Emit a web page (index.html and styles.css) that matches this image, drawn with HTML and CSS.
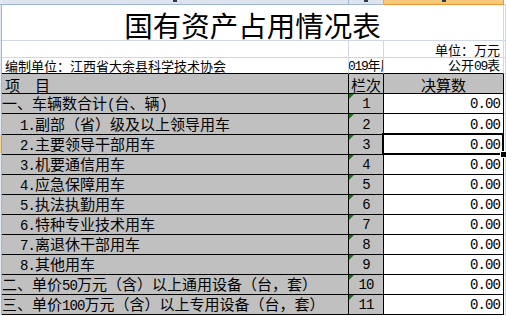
FILE: index.html
```html
<!DOCTYPE html>
<html lang="zh-CN">
<head>
<meta charset="utf-8">
<title>国有资产占用情况表</title>
<link rel="stylesheet" href="styles.css">
</head>
<body>
<div class="sheet">
  <div class="hd-edge"></div>
  <div class="hd"><span class="hd-mark"></span></div>
  <div class="hd"><span class="hd-mark"></span></div>
  <div class="hd hd-sel"><span class="hd-mark"></span></div>
  <div class="hd-d"></div>

  <div class="edge"></div>
  <div class="c title"><span>国有资产占用情况表</span></div>
  <div class="c"></div>

  <div class="edge"></div>
  <div class="c"></div>
  <div class="c"></div>
  <div class="c small right"><span>单位：万元</span></div>
  <div class="c"></div>

  <div class="edge"></div>
  <div class="c small top-line org"><span>编制单位：江西省大余县科学技术协会</span></div>
  <div class="c small top-line clip"><span class="clip-in"><span class="ns">2019</span>年度</span></div>
  <div class="c small top-line right"><span>公开<span class="ns">09</span>表</span></div>
  <div class="c"></div>

  <div class="edge"></div>
  <div class="c b gray head lead"><span>项　目</span></div>
  <div class="c b gray head center"><span>栏次</span></div>
  <div class="c b gray head center"><span>决算数</span></div>
  <div class="c"></div>

  <div class="edge"></div>
  <div class="c b gray lab"><span>一、车辆数合计<span class="n">(</span>台、辆<span class="n">)</span></span></div>
  <div class="c b gray no"><span class="n">1</span></div>
  <div class="c b val"><span class="n">0.00</span></div>
  <div class="c"></div>

  <div class="edge"></div>
  <div class="c b gray lab sub"><span><span class="n">1.</span>副部（省）级及以上领导用车</span></div>
  <div class="c b gray no"><span class="n">2</span></div>
  <div class="c b val"><span class="n">0.00</span></div>
  <div class="c"></div>

  <div class="edge edge-sel"></div>
  <div class="c b gray lab sub"><span><span class="n">2.</span>主要领导干部用车</span></div>
  <div class="c b gray no"><span class="n">3</span></div>
  <div class="c b val sel"><span class="n">0.00</span><span class="selbox"></span><span class="handle"></span></div>
  <div class="c"></div>

  <div class="edge"></div>
  <div class="c b gray lab sub"><span><span class="n">3.</span>机要通信用车</span></div>
  <div class="c b gray no"><span class="n">4</span></div>
  <div class="c b val"><span class="n">0.00</span></div>
  <div class="c"></div>

  <div class="edge"></div>
  <div class="c b gray lab sub"><span><span class="n">4.</span>应急保障用车</span></div>
  <div class="c b gray no"><span class="n">5</span></div>
  <div class="c b val"><span class="n">0.00</span></div>
  <div class="c"></div>

  <div class="edge"></div>
  <div class="c b gray lab sub"><span><span class="n">5.</span>执法执勤用车</span></div>
  <div class="c b gray no"><span class="n">6</span></div>
  <div class="c b val"><span class="n">0.00</span></div>
  <div class="c"></div>

  <div class="edge"></div>
  <div class="c b gray lab sub"><span><span class="n">6.</span>特种专业技术用车</span></div>
  <div class="c b gray no"><span class="n">7</span></div>
  <div class="c b val"><span class="n">0.00</span></div>
  <div class="c"></div>

  <div class="edge"></div>
  <div class="c b gray lab sub"><span><span class="n">7.</span>离退休干部用车</span></div>
  <div class="c b gray no"><span class="n">8</span></div>
  <div class="c b val"><span class="n">0.00</span></div>
  <div class="c"></div>

  <div class="edge"></div>
  <div class="c b gray lab sub"><span><span class="n">8.</span>其他用车</span></div>
  <div class="c b gray no"><span class="n">9</span></div>
  <div class="c b val"><span class="n">0.00</span></div>
  <div class="c"></div>

  <div class="edge"></div>
  <div class="c b gray lab"><span>二、单价<span class="n">50</span>万元（含）以上通用设备（台，套）</span></div>
  <div class="c b gray no"><span class="n">10</span></div>
  <div class="c b val"><span class="n">0.00</span></div>
  <div class="c"></div>

  <div class="edge"></div>
  <div class="c b gray lab"><span>三、单价<span class="n">100</span>万元（含）以上专用设备（台，套）</span></div>
  <div class="c b gray no"><span class="n">11</span></div>
  <div class="c b val"><span class="n">0.00</span></div>
  <div class="c"></div>
</div>
</body>
</html>
```

FILE: styles.css
```css
* { box-sizing: border-box; }

html, body {
  margin: 0;
  padding: 0;
  background: #ffffff;
}

body {
  width: 506px;
  height: 316px;
  overflow: hidden;
  font-family: "Noto Sans CJK SC", "Noto Sans", sans-serif;
  color: #000000;
}

.sheet {
  display: grid;
  grid-template-columns: 2px 347px 35px 120px 2px;
  grid-template-rows: 5px 36px 17px 16px 20px 20px 21px repeat(9, 20px);
}

/* column header strip (bottom of Excel headers) */
.hd-edge {
  background: #e4eaf3;
  border-bottom: 1px solid #9eb6ce;
}
.hd {
  display: flex;
  justify-content: center;
  align-items: flex-start;
  background: #dde4ee;
  border-right: 1px solid #9eb6ce;
  border-bottom: 1px solid #9eb6ce;
}
.hd-sel {
  background: #f8c978;
  border-right-color: #f29436;
  border-bottom-color: #f29436;
}
.hd-d {
  background: #ffffff;
  border-bottom: 1px solid #d0d7e5;
}
.hd-mark {
  width: 4px;
  height: 2px;
  background: #2b3a4e;
}

/* row header edge */
.edge {
  background: #e4eaf3;
  border-right: 1px solid #9eb6ce;
  border-bottom: 1px solid #c5d2e3;
}
.edge-sel {
  background: #f8d28e;
  border-right-color: #f29436;
}

/* cells */
.c {
  display: flex;
  align-items: center;
  white-space: nowrap;
  border-right: 1px solid #d0d7e5;
  border-bottom: 1px solid #d0d7e5;
  font-size: 15px;
  line-height: 15px;
}

.b {
  border-right-color: #000000;
  border-bottom-color: #000000;
}

.gray { background: #c0c0c0; }

.title {
  grid-column: span 3;
  justify-content: center;
  font-size: 28.5px;
  line-height: 29px;
  padding-top: 3px;
}

.small {
  font-size: 13px;
  line-height: 13px;
}

.right {
  justify-content: flex-end;
  padding-right: 3px;
}

.center { justify-content: center; }

.top-line { border-bottom-color: #000000; }

.org { padding-left: 3px; }

.clip {
  overflow: hidden;
  justify-content: center;
}
.clip-in {
  flex: none;
  padding-left: 3px;
}

.head { padding-top: 2px; }
.lead { padding-left: 3px; }

.lab { padding-top: 1px; }
.sub { padding-left: 18px; }

.no {
  position: relative;
  justify-content: center;
  padding-top: 2px;
}
.no::before {
  content: "";
  position: absolute;
  left: 0;
  top: 0;
  width: 0;
  height: 0;
  border-style: solid;
  border-width: 5px 5px 0 0;
  border-color: #0a7d0a transparent transparent transparent;
}

.val {
  justify-content: flex-end;
  padding-right: 3px;
  padding-top: 2px;
}

/* half-width digits / latin */
.n {
  font-family: "Liberation Mono", "DejaVu Sans Mono", monospace;
  font-size: 14px;
  letter-spacing: -0.9px;
}
.ns {
  font-family: "Liberation Mono", "DejaVu Sans Mono", monospace;
  font-size: 13px;
  letter-spacing: -1.3px;
}

/* active cell */
.sel { position: relative; }
.selbox {
  position: absolute;
  left: -2px;
  top: -2px;
  right: -1px;
  bottom: -1px;
  border: 2px solid #000000;
  box-shadow: inset 0 0 0 1px #ffffff;
  z-index: 2;
}
.handle {
  position: absolute;
  right: -4px;
  bottom: -4px;
  width: 7px;
  height: 7px;
  background: #000000;
  border: 1px solid #ffffff;
  z-index: 3;
}
```
